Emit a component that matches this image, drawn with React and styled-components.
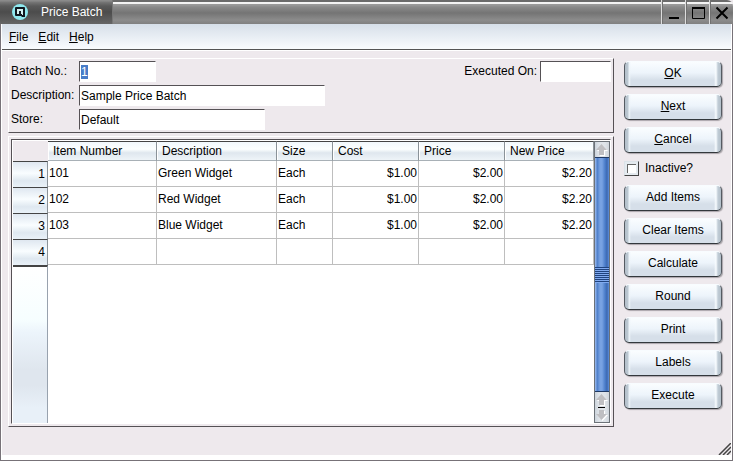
import React from "react";
import styled, { createGlobalStyle, css } from "styled-components";

const Global = createGlobalStyle`
  *, *::before, *::after { box-sizing: border-box; }
  body { margin: 0; background: #eee9ed; }
  body, button, input { font: 12px/14px "Liberation Sans", Arial, sans-serif; color: #000; }
`;

const Window = styled.div`
  position: relative;
  display: flex;
  flex-direction: column;
  min-height: 100vh;
  background: #eee9ed;
`;

const TitleBar = styled.header`
  display: flex;
  height: 24px;
  border-top-right-radius: 6px;
  background: linear-gradient(#6b6b6b 0 2px, #f4f4f4 2px 4px, #9a9a9a 4px 5px, #8a8a8a 7px, #747474 13px, #8c8c8c 20px, #808080 24px);
`;

const TitleTab = styled.div`
  display: flex;
  align-items: center;
  gap: 13px;
  width: 113px;
  padding-left: 12px;
  color: #fff;
  background: linear-gradient(#8a8a8a 0 1px, #777 2px, #5a5a5a 6px, #4c4c4c 12px, #666 24px);
  border-right: 1px solid #777;
`;

const Title = styled.h1`
  margin: 0;
  font-size: 12px;
  font-weight: normal;
`;

const TitleButtons = styled.div`
  display: flex;
  margin-left: auto;
`;

const TitleButton = styled.button`
  display: flex;
  align-items: center;
  justify-content: center;
  width: 24px;
  padding: 2px 0 0;
  border: 0;
  border-left: 1px solid #ddd;
  background: transparent;
  box-shadow: inset 1px 0 #707070;
`;

const Body = styled.div`
  flex: 1;
  display: flex;
  flex-direction: column;
  border: solid #777278;
  border-width: 0 1px 1px;
`;

const Inner = styled.div`
  flex: 1;
  display: flex;
  flex-direction: column;
  border: solid #fff;
  border-width: 0 1px 5px;
`;

const MenuBar = styled.nav`
  display: flex;
  gap: 10px;
  height: 27px;
  padding: 6px 7px 0;
  background: linear-gradient(#d6dfe9, #fbfdff);
  border-bottom: 1px solid #fff;
  box-shadow: inset 0 -1px #555;
`;

const MenuItem = styled.button`
  height: 14px;
  padding: 0;
  border: 0;
  background: none;
`;

const Content = styled.main`
  flex: 1;
  display: flex;
  gap: 10px;
  padding: 7px 9px 28px 6px;
`;

const Main = styled.div`
  flex: 1;
  min-width: 0;
  display: flex;
  flex-direction: column;
  gap: 3px;
`;

const raised = css`
  border: 1px solid;
  border-color: #fff #555155 #555155 #fff;
`;

const Details = styled.form`
  ${raised}
  display: flex;
  justify-content: space-between;
  align-items: flex-start;
  padding: 2px;
`;

const Fields = styled.div`
  display: grid;
  grid-template-columns: 68px auto;
  row-gap: 3px;
  align-items: center;
  justify-items: start;
`;

const FieldLabel = styled.label`
  padding-bottom: 2px;
`;

const ExecutedField = styled.div`
  display: flex;
  align-items: center;
  gap: 3px;
`;

const TextInput = styled.input`
  width: ${(p) => p.$width}px;
  height: 21px;
  padding: 0 1px;
  border: 1px solid;
  border-color: #555155 #fff #fff #555155;
  border-radius: 0;
  outline: 0;
  background: #fff;
  &::selection { background: #477cc8; color: #fff; }
`;

const GridFrame = styled.section`
  ${raised}
  flex: 1;
  display: flex;
  padding: 2px;
`;

const GridView = styled.div`
  flex: 1;
  min-width: 0;
  display: flex;
  border: 1px solid;
  border-color: #555155 #fff #fff #555155;
  padding: 1px 0 0 1px;
  background: #fff;
`;

const TableArea = styled.div`
  flex: 1;
  min-width: 0;
  display: flex;
  flex-direction: column;
`;

const Table = styled.table`
  width: 100%;
  table-layout: fixed;
  border-collapse: separate;
  border-spacing: 0;
`;

const Col = styled.col`
  width: ${(p) => p.$width}px;
`;

const Corner = styled.td`
  padding: 0;
  background: #eee9ed;
`;

const ColumnHead = styled.th`
  height: 20px;
  padding: 0 5px;
  text-align: left;
  font-weight: normal;
  background: linear-gradient(#f2f8fc, #fcffff 40%, #dfe7ee 60%, #eef4f8);
  border-top: 1px solid #444;
  border-right: 1px solid #8a9298;
  border-bottom: 1px solid #a8b0b6;
  box-shadow: inset 1px 0 #fff;
`;

const RowHead = styled.th`
  height: 26px;
  padding: 0 2px 1px 0;
  text-align: right;
  font-weight: normal;
  background: linear-gradient(#dfe7f0, #f9fdff 45%, #dfe8f0 75%, #e9f1f8);
  border-top: 1px solid #444;
  border-right: 1px solid #8a9298;
`;

const Cell = styled.td`
  height: 26px;
  padding: 0 1px 2px;
  text-align: ${(p) => (p.$numeric ? "right" : "left")};
  border-right: 1px solid #bebebe;
  border-bottom: 1px solid #bebebe;
`;

const RowGutter = styled.div`
  flex: 1;
  width: 35px;
  border-top: 2px solid #444;
  border-right: 1px solid #98a2ae;
  background: linear-gradient(#fff, #f6feff 34%, #ecf4fb 42%, #dfe6ee 66%, #dfe6ee 76%, #e8f0f8 90%);
`;

const ScrollBar = styled.div`
  display: flex;
  flex-direction: column;
  width: 16px;
  border: 1px solid #6c7278;
`;

const ScrollButton = styled.button`
  display: flex;
  flex-direction: column;
  align-items: center;
  justify-content: center;
  gap: 1px;
  height: ${(p) => p.$height}px;
  padding: 0;
  border: 0;
  background: linear-gradient(90deg, #ccd4dc, #dfe4e9 4px, #dfe4e9 10px, #d0d6dc);
`;

const Thumb = styled.div`
  flex: 1;
  display: flex;
  align-items: center;
  border: solid #1f3a66;
  border-width: 1px 0;
  background: linear-gradient(90deg, #8db0e8 0 1px, #4a7cc8 2px, #78a2e2 5px, #78a2e2 7px, #4c7ecb 10px, #3c68b0 12px, #5f90dc);
`;

const Grip = styled.div`
  width: 100%;
  height: 16px;
  background: repeating-linear-gradient(#1f437f 0 1px, #80aaf0 1px 2px);
`;

const Actions = styled.aside`
  display: flex;
  flex-direction: column;
  width: 98px;
  padding-top: 3px;
  gap: 7px;
`;

const ActionButton = styled.button`
  height: 26px;
  padding: 0 0 2px;
  border: 1px solid;
  border-color: #f8fcff #555b62 #33383c #555b62;
  border-radius: 5px;
  background:
    linear-gradient(90deg, #b4c0ca 0, #bcc8d2 3px, #eef5fa 4px, transparent 6px, transparent calc(100% - 7px), #f8fcff calc(100% - 5px), #c0ccd6 calc(100% - 3px), #b4c0ca 100%),
    linear-gradient(#fafdff, #edf4fb 45%, #d6dfe9 75%, #d6dfe9);
  box-shadow: 1px 1px 1px #aaa5aa;
`;

const CheckLabel = styled.label`
  display: flex;
  align-items: center;
  gap: 6px;
  height: 18px;
  padding-bottom: 2px;
`;

const CheckBox = styled.input`
  appearance: none;
  width: 15px;
  height: 15px;
  margin: 0;
  border: 1px solid;
  border-color: #dce3e9 #444 #444 #dce3e9;
  background: #fff;
  box-shadow: inset 0 0 0 2px #e5ebf0, inset 3px 3px #666;
`;

const ResizeGrip = styled.svg`
  position: absolute;
  right: 2px;
  bottom: 6px;
`;

const Logo = () => (
  <svg width="16" height="16" viewBox="0 0 16 16" aria-hidden="true">
    <circle cx="8" cy="8" r="8" fill="#8ee8ee" />
    <path d="M4 3h8q1 0 1 1v9h-3l-1-1H4q-1 0-1-1V4q0-1 1-1z" fill="#101820" />
    <path d="M5 5h6v5H5z" fill="#d4f2f2" />
    <path d="M7 7h2v3H7z" fill="#101820" />
    <path d="M9 9l2 2" stroke="#d4f2f2" />
  </svg>
);

const Arrow = ({ down }) => {
  const shape = down ? "M3 1h5v4h3L5.500 11 0 5h3z" : "M3 11h5V6h3L5.500 0 0 6h3z";
  return (
    <svg width="12" height="12" viewBox="0 0 12 12" aria-hidden="true">
      <path d={shape} fill="#fff" transform="translate(1 1)" />
      <path d={shape} fill="#bfbfc2" />
    </svg>
  );
};

const columns = [
  ["Item Number", 109],
  ["Description", 120],
  ["Size", 56],
  ["Cost", 86],
  ["Price", 86],
  ["New Price", 89],
];

const rows = [
  ["101", "Green Widget", "Each", "$1.00", "$2.00", "$2.20"],
  ["102", "Red Widget", "Each", "$1.00", "$2.00", "$2.20"],
  ["103", "Blue Widget", "Each", "$1.00", "$2.00", "$2.20"],
  ["", "", "", "", "", ""],
];

const Mnemonic = ({ text }) => (
  <span>
    <u>{text[0]}</u>
    {text.slice(1)}
  </span>
);

const selectOnFocus = (e) => e.target.select();

export default function App() {
  return (
    <Window>
      <Global />
      <TitleBar>
        <TitleTab>
          <Logo />
          <Title>Price Batch</Title>
        </TitleTab>
        <TitleButtons>
          <TitleButton aria-label="Minimize">
            <svg width="14" height="14"><path d="M2 12h10" stroke="#000" strokeWidth="2" /></svg>
          </TitleButton>
          <TitleButton aria-label="Maximize">
            <svg width="14" height="14"><path d="M1.500 1.500h12v11h-12z" fill="none" stroke="#000" /><path d="M1 2h13" stroke="#000" strokeWidth="2" /></svg>
          </TitleButton>
          <TitleButton aria-label="Close">
            <svg width="14" height="14"><path d="M1.500 1.500l11 11M12.500 1.500l-11 11" stroke="#000" strokeWidth="2" /></svg>
          </TitleButton>
        </TitleButtons>
      </TitleBar>
      <Body>
        <Inner>
          <MenuBar>
            {["File", "Edit", "Help"].map((m) => (
              <MenuItem key={m}><Mnemonic text={m} /></MenuItem>
            ))}
          </MenuBar>
          <Content>
            <Main>
              <Details onSubmit={(e) => e.preventDefault()}>
                <Fields>
                  <FieldLabel htmlFor="batch">Batch No.:</FieldLabel>
                  <TextInput id="batch" $width={77} defaultValue="1" autoFocus onFocus={selectOnFocus} />
                  <FieldLabel htmlFor="description">Description:</FieldLabel>
                  <TextInput id="description" $width={246} defaultValue="Sample Price Batch" />
                  <FieldLabel htmlFor="store">Store:</FieldLabel>
                  <TextInput id="store" $width={186} defaultValue="Default" />
                </Fields>
                <ExecutedField>
                  <FieldLabel htmlFor="executed">Executed On:</FieldLabel>
                  <TextInput id="executed" $width={71} />
                </ExecutedField>
              </Details>
              <GridFrame>
                <GridView>
                  <TableArea>
                    <Table>
                      <colgroup>
                        <Col $width={35} />
                        {columns.map(([name, width]) => <Col key={name} $width={width} />)}
                      </colgroup>
                      <thead>
                        <tr>
                          <Corner />
                          {columns.map(([name]) => <ColumnHead key={name} scope="col">{name}</ColumnHead>)}
                        </tr>
                      </thead>
                      <tbody>
                        {rows.map((row, i) => (
                          <tr key={i}>
                            <RowHead scope="row">{i + 1}</RowHead>
                            {row.map((value, c) => <Cell key={c} $numeric={c > 2}>{value}</Cell>)}
                          </tr>
                        ))}
                      </tbody>
                    </Table>
                    <RowGutter />
                  </TableArea>
                  <ScrollBar>
                    <ScrollButton $height={15} aria-label="Scroll up"><Arrow /></ScrollButton>
                    <Thumb><Grip /></Thumb>
                    <ScrollButton $height={30} aria-label="Scroll down">
                      <Arrow />
                      <svg width="12" height="1" aria-hidden="true"><path d="M2 .5h7" stroke="#000" /></svg>
                      <Arrow down />
                    </ScrollButton>
                  </ScrollBar>
                </GridView>
              </GridFrame>
            </Main>
            <Actions>
              {["OK", "Next", "Cancel"].map((name) => (
                <ActionButton key={name}><Mnemonic text={name} /></ActionButton>
              ))}
              <CheckLabel><CheckBox type="checkbox" />Inactive?</CheckLabel>
              {["Add Items", "Clear Items", "Calculate", "Round", "Print", "Labels", "Execute"].map((name) => (
                <ActionButton key={name}>{name}</ActionButton>
              ))}
            </Actions>
          </Content>
        </Inner>
      </Body>
      <ResizeGrip width="13" height="12" aria-hidden="true">
        <path d="M1 12L13 0M5 12l8-8M9 12l4-4" stroke="#444" strokeWidth="1.500" />
      </ResizeGrip>
    </Window>
  );
}
